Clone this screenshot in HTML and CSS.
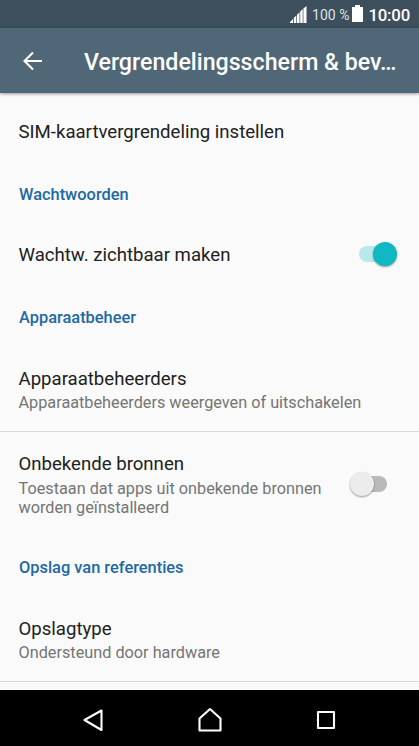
FILE: index.html
```html
<!DOCTYPE html>
<html lang="nl">
<head>
<meta charset="utf-8">
<title>Vergrendelingsscherm &amp; beveiliging</title>
<link rel="stylesheet" href="styles.css">
</head>
<body>
<div class="phone">
  <div class="status">
    <svg class="signal" width="17" height="17" viewBox="0 0 17 17"><path d="M0 17v-1l3-3v4zM3.800 17v-5l2.500-2.500v7.500zM7 17V8.800l2.500-2.500V17zM10.200 17V5.600l2.500-2.500V17zM13.400 17V2.400L16.500 0v17z" fill="#fff"/></svg>
    <span class="percent">100 %</span>
    <svg class="battery" width="11" height="17" viewBox="0 0 11 17"><path d="M3 0h5v2h3v15H0V2h3z" fill="#fff"/></svg>
    <span class="clock">10:00</span>
  </div>
  <header class="bar">
    <svg class="back" width="20" height="20" viewBox="0 0 20 20"><path d="M19 9H2M10 .5L1.500 9l8.500 8.500" fill="none" stroke="#fff" stroke-width="2.100"/></svg>
    <h1>Vergrendelingsscherm &amp; bev…</h1>
  </header>
  <main class="list">
    <div class="row sim"><div class="title">SIM-kaartvergrendeling instellen</div></div>
    <h2>Wachtwoorden</h2>
    <div class="row visible"><div class="title">Wachtw. zichtbaar maken</div><span class="switch on"></span></div>
    <h2>Apparaatbeheer</h2>
    <div class="row admins"><div><div class="title">Apparaatbeheerders</div><div class="sub">Apparaatbeheerders weergeven of uitschakelen</div></div></div>
    <div class="row unknown"><div><div class="title">Onbekende bronnen</div><div class="sub">Toestaan dat apps uit onbekende bronnen<br>worden geïnstalleerd</div></div><span class="switch"></span></div>
    <h2>Opslag van referenties</h2>
    <div class="row storage"><div><div class="title">Opslagtype</div><div class="sub">Ondersteund door hardware</div></div></div>
  </main>
  <nav class="nav">
    <svg width="24" height="24" viewBox="0 0 24 24"><path d="M20.500 2.500v19.500L3.500 12z"/></svg>
    <svg width="26" height="26" viewBox="0 0 26 26"><path d="M2.500 11.500L13 2 23.500 11.500v12h-21z"/></svg>
    <svg width="20" height="20" viewBox="0 0 20 20"><path d="M2 2h16v16H2z"/></svg>
  </nav>
</div>
</body>
</html>
```
FILE: styles.css
```css
* { box-sizing: border-box; }
body { margin: 0; font-family: Roboto, "Liberation Sans", sans-serif; }
.phone { width: 419px; height: 746px; display: flex; flex-direction: column; overflow: hidden; background: #fafafa; }
.status { height: 28px; flex: none; display: flex; align-items: center; justify-content: flex-end; padding: 1px 9px 0 0; background: #3d4f5c; color: #fff; }
.signal { margin-top: -1px; }
.battery { margin-top: -2px; }
.percent { font-size: 14px; margin: 0 3px 0 5px; color: #dfe3e6; }
.clock { font-size: 16.800px; font-weight: 500; letter-spacing: -.2px; margin-left: 5px; }
.bar { height: 65px; flex: none; display: flex; align-items: center; padding: 2px 15px 0 23px; background: #506777; color: #fff; box-shadow: 0 1px 3px rgba(0,0,0,.4); z-index: 1; }
.back { flex: none; margin-right: 41px; }
h1 { margin: 0; flex: 1; font-size: 23.200px; line-height: 32px; font-weight: 500; white-space: nowrap; }
.list { height: 597px; flex: none; }
h2 { margin: 0; padding-left: 19px; height: 46px; line-height: 50px; font-size: 16.400px; font-weight: 500; color: #1d69a3; }
.row { display: flex; align-items: center; justify-content: space-between; padding: 0 19px 0 18.500px; }
.title { font-size: 18.600px; line-height: 25px; color: #212121; }
.sub { font-size: 16.250px; line-height: 19px; color: #757575; margin-top: 2px; }
.sim { height: 77px; padding-top: 1px; }
.visible { height: 77px; }
.visible .title { padding-top: 2px; }
.visible .switch { margin-top: -1px; }
.admins { height: 93px; padding-top: 7px; border-bottom: 1px solid #d8d8d8; }
.admins .title { padding-top: 1px; margin-bottom: -1px; }
.unknown { height: 111px; padding-bottom: 7px; }
.storage { height: 93px; padding-top: 8px; border-bottom: 1px solid #d8d8d8; }
.storage .title { padding-top: 1px; margin-bottom: -1px; }
.switch { position: relative; width: 28px; height: 16px; border-radius: 8px; background: #b9b9b9; margin-right: 13px; }
.switch::after { content: ""; position: absolute; left: -9px; top: -4px; width: 24px; height: 24px; border-radius: 50%; background: #ececec; box-shadow: 0 1px 2px rgba(0,0,0,.4); }
.switch.on { background: #b9e9ec; }
.switch.on::after { left: 14px; background: #0fb8c3; }
.nav { height: 56px; flex: none; background: #000; display: flex; align-items: center; justify-content: space-between; padding: 3px 83px 0 81px; }
.nav svg:nth-child(2) { margin-right: 2px; }
.nav path { fill: none; stroke: #fff; stroke-width: 2.100; stroke-linejoin: round; }
```
